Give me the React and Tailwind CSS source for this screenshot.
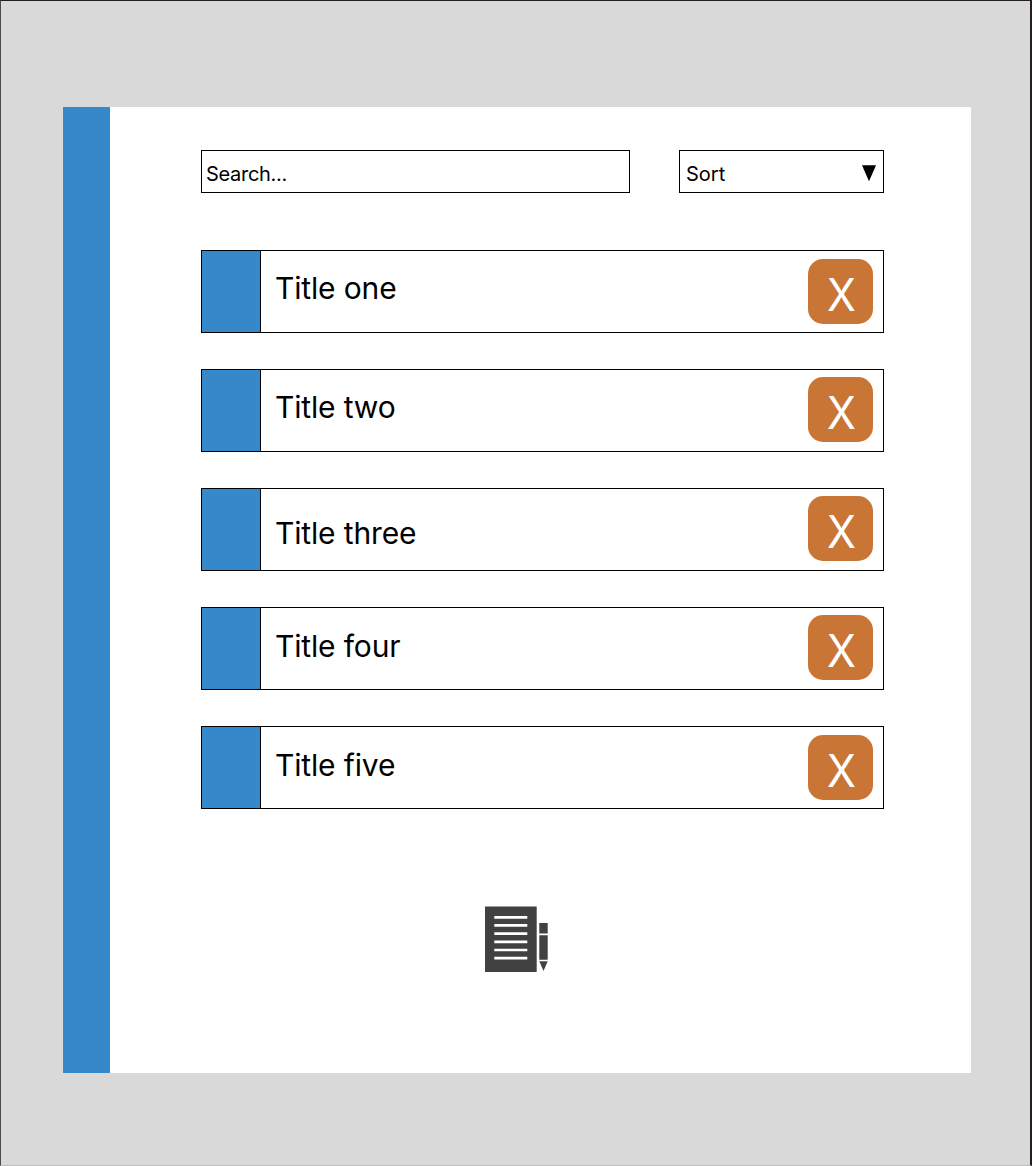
const items = [
  { title: "Title one", text: "pt-[18px]", button: "mt-[8px]" },
  { title: "Title two", text: "pt-[18px]", button: "mt-[7px]" },
  { title: "Title three", text: "pt-[25px]", button: "mt-[7px]" },
  { title: "Title four", text: "pt-[19px]", button: "mt-[7px]" },
  { title: "Title five", text: "pt-[19px]", button: "mt-[8px]" },
];

function Row({ title, text, button }) {
  return (
    <li className="flex h-[83px] border border-black">
      <div className="w-[59px] shrink-0 border-r border-black bg-[#3588c9]" />
      <span className={`flex-1 pl-[14px] text-[30px] leading-[38px] tracking-[-0.15px] ${text}`}>
        {title}
      </span>
      <button
        className={`mr-[10px] flex h-[65px] w-[65px] items-start justify-center rounded-[15px] bg-[#c97536] pl-[2px] pt-[9px] text-[45px] leading-[54px] text-white ${button}`}
      >
        <span className="scale-x-[0.94]">X</span>
      </button>
    </li>
  );
}

function NoteIcon() {
  return (
    <svg width="64" height="68" viewBox="0 0 64 68" fill="#414141">
      <path d="M0 1.5H51.7V67H0Z" />
      <path
        d="M9.3 12.3H42.3M9.3 20.4H42.3M9.3 28.6H42.3M9.3 36.8H42.3M9.3 45H42.3M9.3 53.2H42.3"
        stroke="#fff"
        strokeWidth="2.7"
      />
      <path d="M54.3 18H62.7V28.5H54.3ZM54.3 30.3H62.7V54.8H54.3ZM54.3 56.3H62.7L58.5 66Z" />
    </svg>
  );
}

export default function App() {
  return (
    <div className="h-[1166px] w-[1032px] border-b border-l border-r-2 border-t border-b-[#bcbcbc] border-l-[#4b494a] border-r-[#231f20] border-t-[#231f20] bg-[#d9d9d9] pl-[62px] pt-[106px] font-['Inter',sans-serif] text-black">
      <main className="flex h-[966px] w-[908px] bg-white">
        <div className="w-[47px] shrink-0 bg-[#3588c9]" />
        <div className="flex flex-col pl-[91px] pt-[43px]">
          <div className="flex w-[683px] justify-between">
            <input
              aria-label="Search"
              placeholder="Search..."
              className="h-[43px] w-[429px] border border-black pl-[4px] pt-[4px] text-[20px] tracking-[-0.3px] placeholder:text-black"
            />
            <div className="flex h-[43px] w-[205px] items-start justify-between border border-black pl-[6px] pr-[7px] text-[20px]">
              <span className="pt-[8px] leading-[30px]">Sort</span>
              <svg className="mt-[14px]" width="14" height="17" viewBox="0 0 14 17">
                <path d="M0 0.3H14L7 16.3Z" />
              </svg>
            </div>
          </div>
          <ul className="mt-[57px] flex w-[683px] flex-col gap-[36px]">
            {items.map((item) => (
              <Row key={item.title} {...item} />
            ))}
          </ul>
          <div className="ml-[284px] mt-[96px]">
            <NoteIcon />
          </div>
        </div>
      </main>
    </div>
  );
}
